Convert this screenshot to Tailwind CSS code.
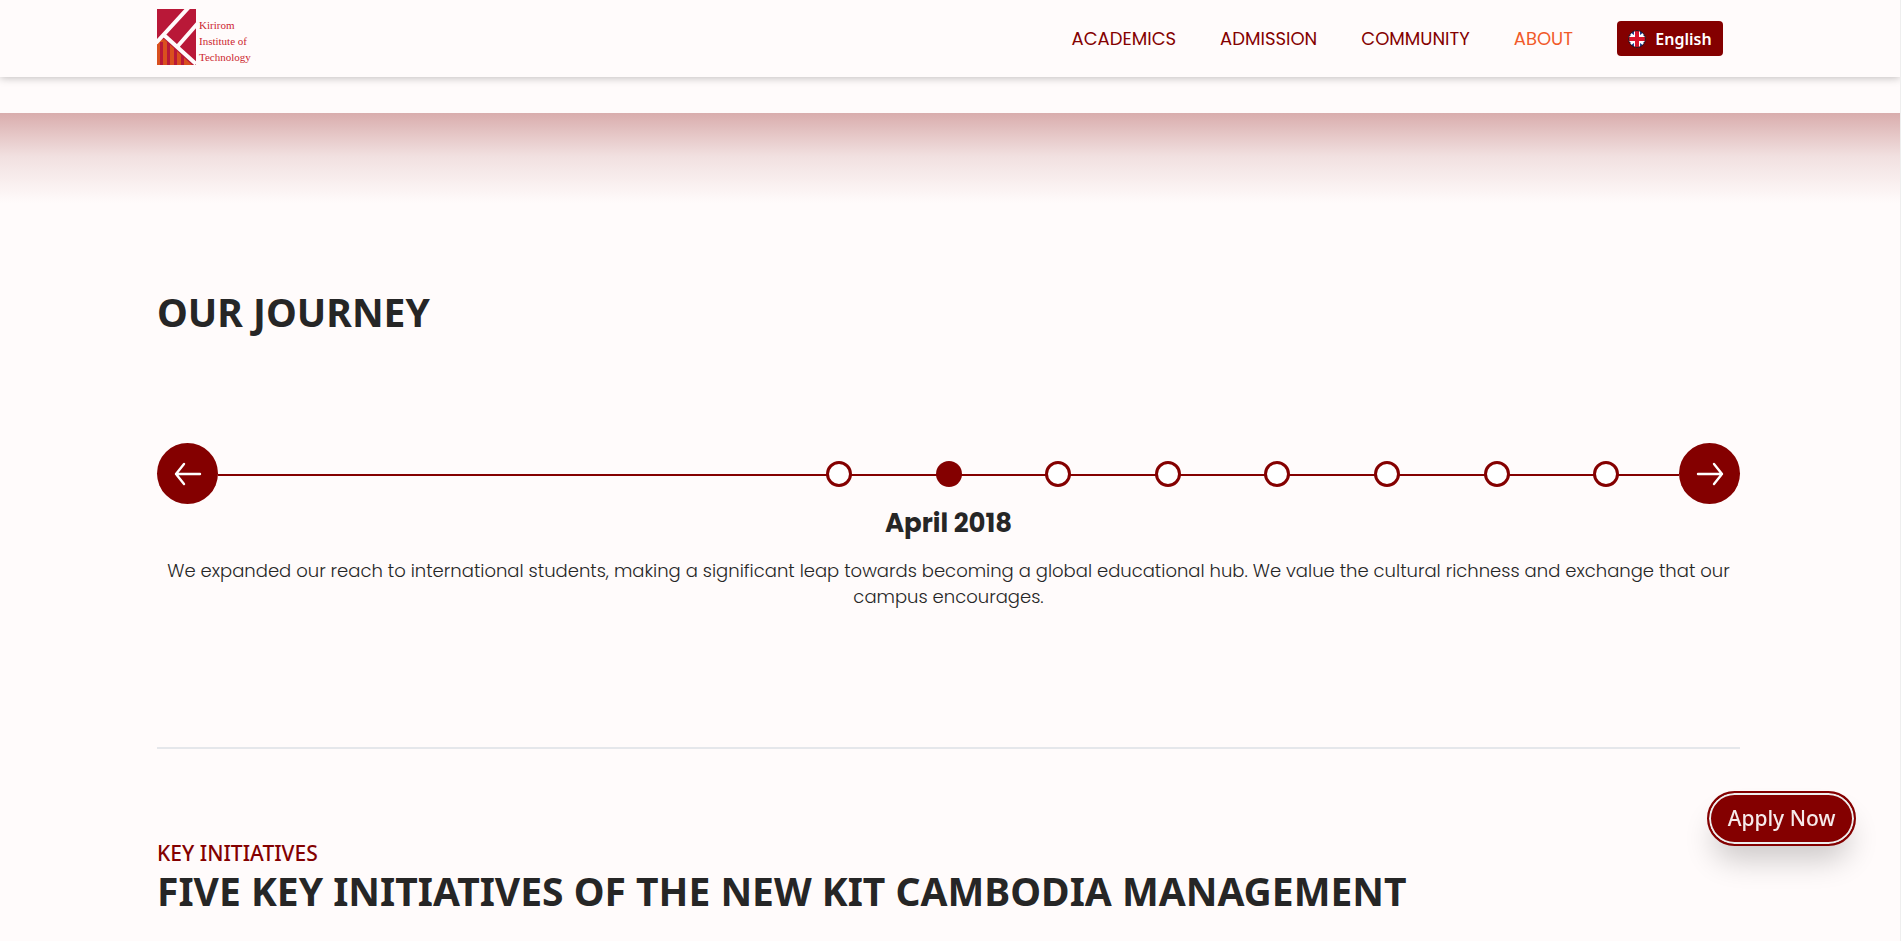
<!DOCTYPE html>
<html lang="en">
<head>
<meta charset="utf-8">
<title>Kirirom Institute of Technology</title>
<meta name="viewport" content="width=device-width, initial-scale=1">
<script src="https://cdn.jsdelivr.net/npm/@tailwindcss/browser@4"></script>
</head>
<body class="min-h-screen overflow-hidden border-r border-[#eeeeee] bg-[#fffbfb] font-['Poppins','Inter',sans-serif] text-[#262626]">
<header class="relative flex h-[77px] items-center justify-between bg-[#fffbfb] pr-[177px] pl-[157px] shadow-[0_1px_8px_rgba(0,0,0,0.25)]">
  <a href="#" class="flex items-end gap-[3px] pb-1" aria-label="Kirirom Institute of Technology">
    <svg class="h-[56px] w-[39px]" viewBox="0 0 39 56">
      <rect width="39" height="56" fill="#b91838"/>
      <path d="M7 30L35 56H0V32Z" fill="#d9501e"/>
      <path d="M3 33H6V56H3ZM10 33H13V56H10ZM17 39H20V56H17ZM24 45H27V56H24Z" fill="#b91838"/>
      <path d="M-1 34L32 -2M8 27L39 55M20 38L41 14" stroke="#fffbfb" stroke-width="4" fill="none"/>
    </svg>
    <span class="font-['Liberation_Serif',serif] text-[11px] leading-4 font-medium text-[#cc1f2f]">Kirirom<br>Institute of<br>Technology</span>
  </a>
  <nav class="flex items-center gap-11 text-lg text-[#840000]">
    <a href="#">ACADEMICS</a>
    <a href="#">ADMISSION</a>
    <a href="#">COMMUNITY</a>
    <a href="#" class="text-[#f15a29]">ABOUT</a>
    <button class="flex h-[35px] w-[106px] items-center justify-center gap-[9px] rounded bg-[#840000] font-['Segoe_UI','Noto_Sans',sans-serif] text-base font-semibold text-white">
      <svg class="size-[18px]" viewBox="0 0 18 18">
        <defs><clipPath id="disc"><circle cx="9" cy="9" r="8.5"/></clipPath></defs>
        <g clip-path="url(#disc)">
          <rect width="18" height="18" fill="#1d3f94"/>
          <path d="M0 2L18 16M18 2L0 16" stroke="#fff" stroke-width="2.5"/>
          <path d="M9 0V18M0 9H18" stroke="#fff" stroke-width="6"/>
          <path d="M9 0V18M0 9H18" stroke="#d8142c" stroke-width="4"/>
        </g>
        <circle cx="9" cy="9" r="8.5" fill="none" stroke="#2b1016"/>
      </svg>
      English
    </button>
  </nav>
</header>
<main>
  <div class="mt-9 h-[90px] bg-linear-to-b from-[#d9adad] via-[#f1e0e0] via-48% to-[#fffbfb]"></div>
  <section class="pr-[160px] pl-[157px]">
    <h2 class="pt-[81px] font-['Segoe_UI','Noto_Sans',sans-serif] text-[39px] leading-[56px] font-bold">OUR JOURNEY</h2>
    <div class="mt-[103px] flex items-center">
      <button aria-label="Previous" class="flex size-[61px] items-center justify-center rounded-full bg-[#840000]">
        <svg class="h-6 w-7" viewBox="0 0 28 24" fill="none" stroke="#fff" stroke-width="2.4" stroke-linecap="round" stroke-linejoin="round"><path d="M26 12H2M10 2L2 12L10 22"/></svg>
      </button>
      <div class="flex flex-1 bg-[linear-gradient(to_bottom,transparent_13px,#840000_13px,#840000_15px,transparent_15px)]">
        <ol class="mr-[18px] ml-auto grid w-3/5 grid-cols-8 justify-items-center">
          <li class="flex"><button aria-label="Milestone 1" class="size-[26px] rounded-full border-3 border-[#840000] bg-white"></button></li>
          <li class="flex"><button aria-label="April 2018" class="size-[26px] rounded-full bg-[#840000]"></button></li>
          <li class="flex"><button aria-label="Milestone 3" class="size-[26px] rounded-full border-3 border-[#840000] bg-white"></button></li>
          <li class="flex"><button aria-label="Milestone 4" class="size-[26px] rounded-full border-3 border-[#840000] bg-white"></button></li>
          <li class="flex"><button aria-label="Milestone 5" class="size-[26px] rounded-full border-3 border-[#840000] bg-white"></button></li>
          <li class="flex"><button aria-label="Milestone 6" class="size-[26px] rounded-full border-3 border-[#840000] bg-white"></button></li>
          <li class="flex"><button aria-label="Milestone 7" class="size-[26px] rounded-full border-3 border-[#840000] bg-white"></button></li>
          <li class="flex"><button aria-label="Milestone 8" class="size-[26px] rounded-full border-3 border-[#840000] bg-white"></button></li>
        </ol>
      </div>
      <button aria-label="Next" class="flex size-[61px] items-center justify-center rounded-full bg-[#840000]">
        <svg class="h-6 w-7" viewBox="0 0 28 24" fill="none" stroke="#fff" stroke-width="2.4" stroke-linecap="round" stroke-linejoin="round"><path d="M2 12H26M18 2L26 12L18 22"/></svg>
      </button>
    </div>
    <div class="px-1 pt-px text-center">
      <h3 class="text-[26px] leading-9 font-bold">April 2018</h3>
      <p class="mt-[17px] text-lg leading-[26px] font-light">We expanded our reach to international students, making a significant leap towards becoming a global educational hub. We value the cultural richness and exchange that our campus encourages.</p>
    </div>
    <hr class="mt-[137px] border-t-2 border-[#e5e7eb]">
    <div class="pt-[89px] font-['Segoe_UI','Noto_Sans',sans-serif]">
      <p class="text-[21px] leading-[30px] font-medium text-[#840000]">KEY INITIATIVES</p>
      <h2 class="text-[39px] leading-[46px] font-bold">FIVE KEY INITIATIVES OF THE NEW KIT CAMBODIA MANAGEMENT</h2>
    </div>
  </section>
</main>
<a href="#" class="fixed right-[45px] bottom-[95px] flex h-[55px] w-[149px] items-center justify-center rounded-full border-2 border-[#840000] bg-[#840000] pt-px font-['Segoe_UI','Noto_Sans',sans-serif] text-[21px] font-medium text-[#f5eaea] shadow-[inset_0_0_0_2px_#eeeeee,0_20px_30px_-6px_rgba(0,0,0,0.2)]">Apply Now</a>
</body>
</html>
